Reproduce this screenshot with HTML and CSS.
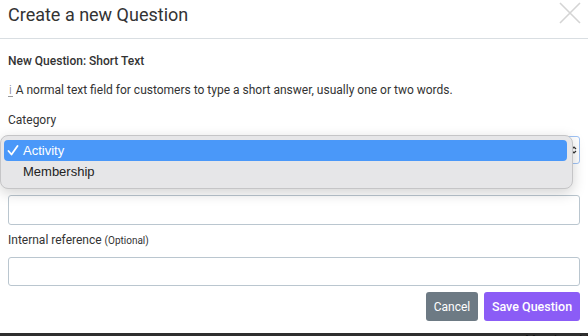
FILE: index.html
```html
<!DOCTYPE html>
<html lang="en">
<head>
    <meta charset="UTF-8">
    <meta name="viewport" content="width=device-width, initial-scale=1.0">
    <title>Create a new Question</title>
    <link rel="stylesheet" href="styles.css">
</head>
<body>
    <div class="modal">
        <div class="modal-header">
            <h2 class="modal-title">Create a new Question</h2>
            <button class="close" type="button" aria-label="Close">
                <svg width="24" height="24" viewBox="0 0 24 24">
                    <path d="M2 2 L22 22 M22 2 L2 22" stroke="#d4d4d4" stroke-width="1.6" fill="none"/>
                </svg>
            </button>
        </div>
        <div class="modal-body">
            <div class="question-type">New Question: Short Text</div>
            <p class="info"><span class="info-icon">i</span> A normal text field for customers to type a short answer, usually one or two words.</p>
            <div class="form-group category-group">
                <label>Category</label>
                <div class="select-wrap">
                    <div class="select">
                        <span class="select-arrow">
                            <svg width="6" height="10" viewBox="0 0 6 10">
                                <path d="M1 4 L3 2 L5 4 M1 6 L3 8 L5 6" stroke="#333" stroke-width="1.2" fill="none"/>
                            </svg>
                        </span>
                    </div>
                    <ul class="select-menu">
                        <li class="selected">
                            <span class="check">
                                <svg width="12" height="11" viewBox="0 0 12 11">
                                    <path d="M1.5 6 L4.5 9.5 L10.5 1" stroke="white" stroke-width="1.8" fill="none" stroke-linecap="round" stroke-linejoin="round"/>
                                </svg>
                            </span>Activity
                        </li>
                        <li><span class="check"></span>Membership</li>
                    </ul>
                </div>
            </div>
            <div class="form-group question-group">
                <input type="text" class="form-control">
            </div>
            <div class="form-group reference-group">
                <label>Internal reference <small>(Optional)</small></label>
                <input type="text" class="form-control">
            </div>
            <div class="actions">
                <button type="button" class="btn btn-cancel">Cancel</button>
                <button type="button" class="btn btn-save">Save Question</button>
            </div>
        </div>
    </div>
    <div class="backdrop-text">Membership</div>
</body>
</html>
```

FILE: styles.css
```css
body {
    margin: 0;
    font-family: Roboto, 'Liberation Sans', sans-serif;
    background-color: #2e2e2e;
    color: #333;
    overflow: hidden;
    height: 336px;
}
.modal {
    background: white;
    height: 333px;
}
.modal-header {
    display: flex;
    justify-content: space-between;
    align-items: flex-start;
    height: 38px;
    padding: 0 8px;
    border-bottom: 1px solid #d9dee2;
}
.modal-title {
    margin: 4px 0 0 0;
    font-size: 18px;
    font-weight: 400;
    line-height: 22px;
    color: #333;
}
.close {
    background: none;
    border: none;
    padding: 0;
    margin: 1px -2px 0 0;
    cursor: pointer;
}
.modal-body {
    padding: 14px 8px 0 8px;
}
.question-type {
    font-size: 12px;
    font-weight: 500;
    line-height: 16px;
    color: #333;
}
.info {
    margin: 13px 0 0 0;
    font-size: 12px;
    line-height: 16px;
    color: #333;
}
.info-icon {
    display: inline-block;
    font-weight: 300;
    color: #777;
    border-bottom: 1px solid #999;
    line-height: 11px;
    padding: 0 1px;
}
.category-group {
    margin-top: 14px;
}
.question-group {
    margin-top: 31px;
}
.reference-group {
    margin-top: 7px;
}
label {
    display: block;
    font-size: 12px;
    line-height: 16px;
    margin-bottom: 8px;
    color: #333;
}
label small {
    font-size: 10px;
}
.select-wrap {
    position: relative;
}
.select {
    height: 28px;
    border: 1px solid #9fc3f5;
    border-radius: 3px;
    box-sizing: border-box;
    display: flex;
    justify-content: flex-end;
    align-items: center;
    padding-right: 2px;
}
.select-arrow {
    display: flex;
}
.select-menu {
    position: absolute;
    left: -8px;
    top: -1px;
    width: 573px;
    box-sizing: border-box;
    margin: 0;
    padding: 4px 5px 5px 3px;
    list-style: none;
    background: #e6e6e8;
    border: 1px solid #c5c5c7;
    border-radius: 8px;
    box-shadow: 0 4px 14px rgba(0, 0, 0, 0.18);
    font-family: 'Liberation Sans', sans-serif;
    font-size: 13px;
    color: #222;
}
.select-menu li {
    height: 21px;
    line-height: 21px;
    border-radius: 4px;
    padding-left: 3px;
    display: flex;
    align-items: center;
}
.select-menu li + li {
    height: 22px;
    line-height: 22px;
}
.select-menu li.selected {
    background: #4a98f9;
    color: white;
}
.check {
    width: 16px;
    display: flex;
    align-items: center;
}
.form-control {
    display: block;
    width: 100%;
    height: 30px;
    box-sizing: border-box;
    border: 1px solid #bac6cf;
    border-radius: 3px;
    font-size: 13px;
}
.reference-group .form-control {
    height: 29px;
}
.actions {
    display: flex;
    justify-content: flex-end;
    gap: 6px;
    margin-top: 6px;
}
.btn {
    border: none;
    border-radius: 3px;
    color: white;
    height: 29px;
    font-family: Roboto, 'Liberation Sans', sans-serif;
    cursor: pointer;
}
.btn-cancel {
    background-color: #6d7a84;
    font-size: 12px;
    width: 52px;
}
.btn-save {
    background-color: #8b5cf6;
    font-size: 12.5px;
    font-weight: 500;
    width: 96px;
}
.backdrop-text {
    margin-left: 525px;
    font-family: 'Liberation Sans', sans-serif;
    font-size: 13px;
    color: #111;
    line-height: 13px;
}
```
